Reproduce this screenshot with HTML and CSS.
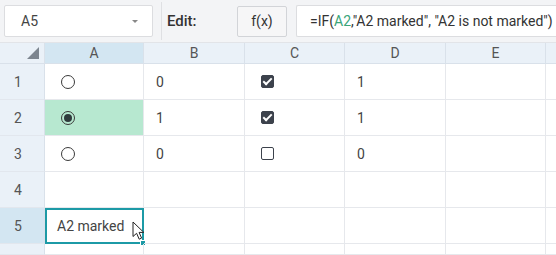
FILE: index.html
```html
<!DOCTYPE html>
<html lang="en">
<head>
    <meta charset="UTF-8">
    <title>Spreadsheet</title>
    <link rel="stylesheet" href="styles.css">
</head>
<body>
    <div class="toolbar">
        <div class="name-box">
            <span>A5</span>
            <span class="caret"></span>
        </div>
        <div class="divider"></div>
        <span class="edit-label">Edit:</span>
        <button class="fx-button">f(x)</button>
        <div class="formula">=IF(<span class="ref">A2</span>,"A2 marked", "A2 is not marked")</div>
    </div>

    <div class="grid">
        <div class="corner"><span class="corner-tri"></span></div>
        <div class="col-head selected">A</div>
        <div class="col-head">B</div>
        <div class="col-head">C</div>
        <div class="col-head">D</div>
        <div class="col-head">E</div>
        <div class="col-head last"></div>

        <div class="row-head">1</div>
        <div class="cell"><span class="radio"></span></div>
        <div class="cell">0</div>
        <div class="cell"><span class="check on"></span></div>
        <div class="cell">1</div>
        <div class="cell"></div>
        <div class="cell last"></div>

        <div class="row-head">2</div>
        <div class="cell green"><span class="radio on"></span></div>
        <div class="cell">1</div>
        <div class="cell"><span class="check on"></span></div>
        <div class="cell">1</div>
        <div class="cell"></div>
        <div class="cell last"></div>

        <div class="row-head">3</div>
        <div class="cell"><span class="radio"></span></div>
        <div class="cell">0</div>
        <div class="cell"><span class="check"></span></div>
        <div class="cell">0</div>
        <div class="cell"></div>
        <div class="cell last"></div>

        <div class="row-head">4</div>
        <div class="cell"></div>
        <div class="cell"></div>
        <div class="cell"></div>
        <div class="cell"></div>
        <div class="cell"></div>
        <div class="cell last"></div>

        <div class="row-head selected">5</div>
        <div class="cell active">A2 marked
            <span class="handle"></span>
            <svg class="pointer" width="13" height="20" viewBox="0 0 13 20">
                <path d="M1 1 L1 15.5 L4.6 12.3 L7.2 18.2 L9.6 17.1 L7.1 11.4 L11.8 11.4 Z" fill="#fff" stroke="#222" stroke-width="1" stroke-linejoin="round"/>
            </svg>
        </div>
        <div class="cell"></div>
        <div class="cell"></div>
        <div class="cell"></div>
        <div class="cell"></div>
        <div class="cell last"></div>

        <div class="row-head"></div>
        <div class="cell"></div>
        <div class="cell"></div>
        <div class="cell"></div>
        <div class="cell"></div>
        <div class="cell"></div>
        <div class="cell last"></div>
    </div>
</body>
</html>
```

FILE: styles.css
```css
* {
    margin: 0;
    padding: 0;
    box-sizing: border-box;
}
body {
    font-family: Roboto, "Noto Sans", Arial, sans-serif;
    font-size: 14px;
    color: #333;
    background-color: #fff;
    width: 556px;
    height: 255px;
    overflow: hidden;
}
.toolbar {
    height: 43px;
    background-color: #f3f4f6;
    border-bottom: 1px solid #e2e4e8;
    display: flex;
    align-items: center;
    padding-left: 4px;
}
.name-box {
    width: 149px;
    height: 32px;
    background-color: #fff;
    border: 1px solid #dcdde0;
    border-radius: 2px;
    display: flex;
    align-items: center;
    justify-content: space-between;
    padding: 0 14px 0 16px;
    color: #444;
}
.caret {
    width: 0;
    height: 0;
    border-left: 3px solid transparent;
    border-right: 3px solid transparent;
    border-top: 3px solid #888;
}
.divider {
    width: 1px;
    height: 38px;
    background-color: #dfe0e3;
    margin-left: 8px;
}
.edit-label {
    margin-left: 5px;
    font-size: 15px;
    font-weight: 500;
    color: #333;
    width: 70px;
}
.fx-button {
    width: 50px;
    height: 31px;
    font-family: inherit;
    font-size: 14px;
    color: #333;
    background-color: #f6f6f7;
    border: 1px solid #d2d4d8;
    border-radius: 2px;
}
.formula {
    flex: 1;
    height: 32px;
    margin-left: 9px;
    background-color: #fff;
    border: 1px solid #dcdde0;
    border-right: none;
    border-radius: 2px 0 0 2px;
    display: flex;
    align-items: center;
    padding-left: 13px;
    color: #333;
    white-space: nowrap;
    font-size: 14px;
}
.ref {
    color: #3aa57a;
}
.grid {
    display: grid;
    grid-template-columns: 45px 99px 101px 100px 101px 100px 1fr;
    grid-template-rows: 21px repeat(5, 36px) 11px;
}
.corner,
.col-head,
.row-head {
    background-color: #eaf1f8;
    color: #555;
    display: flex;
    align-items: center;
    justify-content: center;
    border-right: 1px solid #d9e1ea;
    border-bottom: 1px solid #d9e1ea;
}
.corner {
    justify-content: flex-end;
    align-items: flex-end;
    padding: 0 5px 4px 0;
}
.corner-tri {
    width: 0;
    height: 0;
    border-left: 12px solid transparent;
    border-bottom: 12px solid #7d8690;
}
.col-head.selected,
.row-head.selected {
    background-color: #d3e6f2;
}
.row-head {
    justify-content: flex-start;
    padding-left: 14px;
    border-bottom-color: #e2e7ee;
}
.cell {
    position: relative;
    display: flex;
    align-items: center;
    padding-left: 12px;
    color: #444;
    border-right: 1px solid #e6e8ec;
    border-bottom: 1px solid #e6e8ec;
}
.cell.green {
    background-color: #b7e8d0;
}
.cell.last,
.col-head.last {
    border-right: none;
}
.radio {
    width: 14px;
    height: 14px;
    margin-left: 4px;
    border: 1.5px solid #3a3a3a;
    border-radius: 50%;
    display: flex;
    align-items: center;
    justify-content: center;
}
.radio.on::after {
    content: "";
    width: 8px;
    height: 8px;
    border-radius: 50%;
    background-color: #2f3a3c;
}
.check {
    width: 13px;
    height: 13px;
    margin-left: 4px;
    border: 1.5px solid #3c424c;
    border-radius: 2px;
    position: relative;
}
.check.on {
    background-color: #3c424c;
}
.check.on::after {
    content: "";
    position: absolute;
    left: 3px;
    top: 0px;
    width: 3px;
    height: 7px;
    border-right: 2px solid #fff;
    border-bottom: 2px solid #fff;
    transform: rotate(45deg);
}
.cell.active {
    border: 2px solid #1c9aa6;
    padding-left: 10px;
    color: #444;
}
.handle {
    position: absolute;
    right: -4px;
    bottom: -4px;
    width: 6px;
    height: 6px;
    background-color: #1c9aa6;
    border: 1px solid #fff;
}
.pointer {
    position: absolute;
    left: 85px;
    top: 11px;
}
```
